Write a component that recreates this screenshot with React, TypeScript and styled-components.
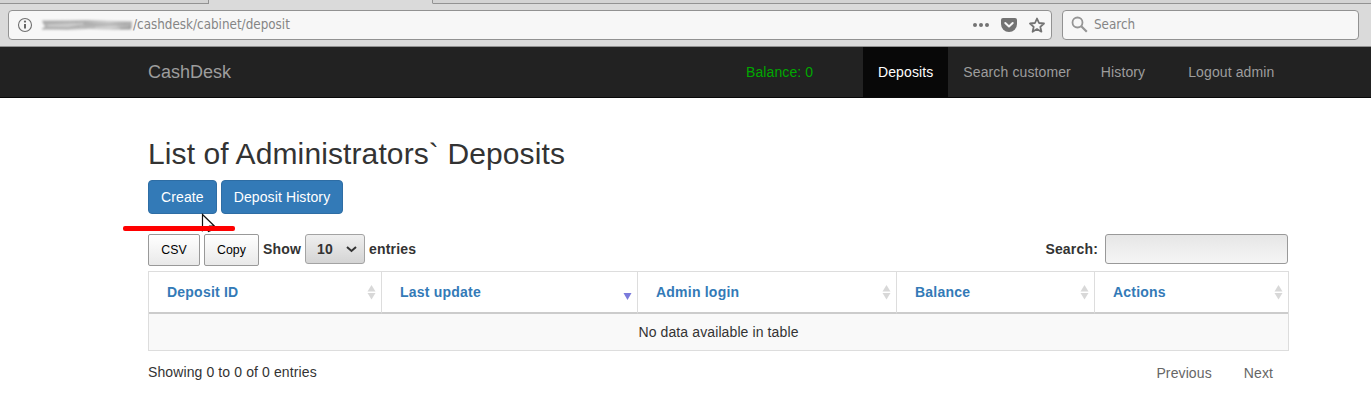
import React from 'react';
import styled, { createGlobalStyle, css } from 'styled-components';

const GlobalStyle = createGlobalStyle`
  * { box-sizing: border-box; }
  body {
    margin: 0;
    background: #fff;
    color: #333;
    font: 14px/20px "Liberation Sans", Arial, sans-serif;
    letter-spacing: 0.11px;
    overflow: hidden;
  }
  button, select, input { font-family: inherit; letter-spacing: inherit; }
`;

const Chrome = styled.header`
  height: 47px;
  background: #dadada;
  border-bottom: 1px solid #919191;
  font: 13.33px/18px "DejaVu Sans Condensed", "DejaVu Sans", sans-serif;
  font-stretch: condensed;
  letter-spacing: 0;
  color: #858585;
`;

const TabStrip = styled.div`
  display: flex;
  height: 4px;
`;

const Tab = styled.div<{ $width?: number; $active?: boolean }>`
  flex: ${p => (p.$width ? `0 0 ${p.$width}px` : '1')};
  background: ${p => (p.$active ? '#dadada' : '#d3d3d3')};
  border-bottom: 1px solid ${p => (p.$active ? 'transparent' : '#929292')};
  border-right: ${p => (p.$width ? '1px solid #929292' : '0')};
`;

const Toolbar = styled.div`
  display: flex;
  gap: 10px;
  padding: 6px 12px 0 8px;
`;

const Field = styled.div<{ $width: number }>`
  display: flex;
  align-items: center;
  width: ${p => p.$width}px;
  height: 30px;
  padding: 0 6px 1px 8px;
  background: #f7f7f7;
  border: 1px solid #929292;
  border-radius: 4px;
`;

const Url = styled.span`
  flex: 1;
  display: flex;
  align-items: center;
  white-space: pre;
`;

const Smudge = styled.svg`
  margin: 0 -1px 0 7px;
`;

const FieldIcons = styled.span`
  display: flex;
  align-items: center;
  gap: 12px;
`;

const SearchHint = styled.span`
  margin-left: 6px;
`;

const Navbar = styled.nav`
  display: flex;
  height: 51px;
  padding-left: 148px;
  background: #222;
  border-bottom: 1px solid #080808;
  color: #9d9d9d;
  line-height: 50px;
`;

const Brand = styled.a`
  width: 597px;
  font-size: 18px;
  letter-spacing: 0;
`;

const Balance = styled.span`
  width: 118px;
  padding-left: 1px;
  color: #00a800;
`;

const NavLink = styled.a<{ $active?: boolean; $spaced?: boolean }>`
  height: 51px;
  padding: 0 15px;
  margin-left: ${p => (p.$spaced ? 13 : 0)}px;
  color: ${p => (p.$active ? '#fff' : '#9d9d9d')};
  background: ${p => (p.$active ? '#080808' : 'transparent')};
`;

const Main = styled.main`
  width: 1141px;
  margin-left: 148px;
  padding-top: 39px;
`;

const Title = styled.h2`
  margin: 0 0 10px;
  font-size: 30px;
  font-weight: 400;
  line-height: 33px;
`;

const Actions = styled.div`
  position: relative;
  display: flex;
  gap: 4px;
`;

const PrimaryButton = styled.button`
  height: 34px;
  padding: 0 12px;
  color: #fff;
  background: #337ab7;
  border: 1px solid #2e6da4;
  border-radius: 4px;
  font-size: 14px;
`;

const Pointer = styled.svg`
  position: absolute;
  left: 53px;
  top: 33px;
`;

const Marker = styled.div`
  position: absolute;
  left: -25px;
  top: 46px;
  width: 112px;
  height: 5px;
  border-radius: 2px;
  background: #f00;
`;

const Controls = styled.div`
  display: flex;
  align-items: flex-start;
  height: 37px;
  margin-top: 20px;
  padding-right: 1px;
`;

const ExportButton = styled.button<{ $width: number }>`
  width: ${p => p.$width}px;
  height: 32px;
  margin-right: 4px;
  padding: 0;
  color: #000;
  background: linear-gradient(#fff, #e9e9e9);
  border: 1px solid #999;
  border-radius: 2px;
  font-size: 12.3px;
`;

const ControlLabel = styled.label<{ $push?: boolean }>`
  font-weight: 700;
  letter-spacing: 0.18px;
  line-height: 30px;
  margin-left: ${p => (p.$push ? 'auto' : '0')};
`;

const LengthSelect = styled.div`
  display: flex;
  align-items: center;
  justify-content: space-between;
  width: 60px;
  height: 30px;
  margin: 0 4px;
  padding: 0 7px 0 11px;
  font-weight: 700;
  background: linear-gradient(#efefef, #d4d4d4);
  border: 1px solid #a3a3a3;
  border-radius: 3px;
`;

const FilterInput = styled.input`
  width: 183px;
  height: 30px;
  margin-left: 7px;
  background: linear-gradient(#e6e6e6, #f5f5f5);
  border: 1px solid #999;
  border-radius: 3px;
`;

const Table = styled.div`
  width: 1141px;
  border: 1px solid #ddd;
`;

const HeadRow = styled.div`
  display: grid;
  grid-template-columns: 233px 256px 259px 198px 193px;
`;

const HeadCell = styled.div`
  display: flex;
  align-items: center;
  justify-content: space-between;
  height: 42px;
  padding: 0 5px 0 18px;
  color: #337ab7;
  font-weight: 700;
  letter-spacing: 0.22px;
  border-bottom: 2px solid #ccc;
  ${css`
    &:not(:last-child) { border-right: 1px solid #ddd; }
  `}
`;

const EmptyRow = styled.div`
  height: 36px;
  line-height: 36px;
  text-align: center;
  background: #f9f9f9;
`;

const Footer = styled.footer`
  display: flex;
  justify-content: space-between;
  padding: 11px 16px 0 0;
`;

const Pager = styled.div`
  display: flex;
  gap: 32px;
  padding-top: 1px;
  color: #666;
`;

const InfoIcon = () => (
  <svg width="16" height="16" viewBox="0 0 16 16">
    <circle cx="8" cy="8" r="6.5" fill="none" stroke="#707070" strokeWidth="1.1" />
    <path d="M8 7v4.5" stroke="#666" strokeWidth="2" />
    <circle cx="8" cy="4.6" r="1.15" fill="#666" />
  </svg>
);

const HiddenHost = () => (
  <Smudge width="94" height="16" viewBox="0 0 94 16">
    <defs>
      <filter id="soft" x="-5%" y="-20%" width="110%" height="140%">
        <feGaussianBlur stdDeviation="0.8" />
      </filter>
      <linearGradient id="ink" x1="0" x2="1">
        <stop offset="0" stopColor="#b2b2b2" />
        <stop offset="0.3" stopColor="#c4c4c4" />
        <stop offset="0.5" stopColor="#b4b4b4" />
        <stop offset="0.75" stopColor="#cbcbcb" />
        <stop offset="1" stopColor="#aaa" />
      </linearGradient>
    </defs>
    <g filter="url(#soft)">
      <path d="M2 3.500 45 3l47 1.500-1 8-18 .3-24-1L28 13 2 12l3-2.500-2-3Z" fill="url(#ink)" />
      <path d="M3 5.500 35 5l20 3 32-1M2 12l26-.8 12-2" fill="none" stroke="#a2a2a2" strokeWidth="1" />
      <path d="M8 8.500h20l15-2M55 10.500l22-1" fill="none" stroke="#d6d6d6" strokeWidth="1.2" />
      <path d="M80 11.500h10l1-3" fill="none" stroke="#8f8f8f" strokeWidth="1.2" />
    </g>
  </Smudge>
);

const DotsIcon = () => (
  <svg width="16" height="16" viewBox="0 0 16 16" fill="#737373">
    <circle cx="2" cy="8" r="2" />
    <circle cx="8" cy="8" r="2" />
    <circle cx="14" cy="8" r="2" />
  </svg>
);

const PocketIcon = () => (
  <svg width="16" height="16" viewBox="0 0 16 16">
    <path d="M2 1h12a2 2 0 0 1 2 2v4a8 8 0 0 1-16 0V3a2 2 0 0 1 2-2Z" fill="#737373" />
    <path d="m4.300 6 3.700 3.500L11.700 6" fill="none" stroke="#f7f7f7" strokeWidth="2" strokeLinecap="round" strokeLinejoin="round" />
  </svg>
);

const StarIcon = () => (
  <svg width="16" height="16" viewBox="0 0 16 16">
    <path
      d="m8 1.500 2 4.500 5 .5-3.700 3.300 1.100 4.900L8 12.100l-4.400 2.600 1.100-4.900L1 6.500 6 6Z"
      fill="none" stroke="#737373" strokeWidth="1.8" strokeLinejoin="round"
    />
  </svg>
);

const LensIcon = () => (
  <svg width="17" height="17" viewBox="0 0 17 17" fill="none" stroke="#959595">
    <circle cx="6.500" cy="6.500" r="5" strokeWidth="1.8" />
    <path d="m10.300 10.300 5.500 5.500" strokeWidth="2.200" />
  </svg>
);

const Chevron = () => (
  <svg width="11" height="7" viewBox="0 0 11 7">
    <path d="m1 1 4.500 4L10 1" fill="none" stroke="#333" strokeWidth="2" />
  </svg>
);

const SortIcon = ({ descending }: { descending?: boolean }) => (
  <svg width="9" height="16" viewBox="0 0 9 16">
    {!descending && <path d="M4.500 1 8.500 7.500h-8Z" fill="#d8d8d8" />}
    <path
      d={descending ? 'M0.500 9h8l-4 7Z' : 'M0.500 9h8l-4 6.500Z'}
      fill={descending ? '#7b7bdc' : '#d8d8d8'}
    />
  </svg>
);

const columns = ['Deposit ID', 'Last update', 'Admin login', 'Balance', 'Actions'];

export default function App() {
  return (
    <>
      <GlobalStyle />
      <Chrome>
        <TabStrip>
          <Tab $width={209} />
          <Tab $width={224} $active />
          <Tab />
        </TabStrip>
        <Toolbar>
          <Field $width={1044}>
            <InfoIcon />
            <Url><HiddenHost />/cashdesk/cabinet/deposit</Url>
            <FieldIcons><DotsIcon /><PocketIcon /><StarIcon /></FieldIcons>
          </Field>
          <Field $width={297}>
            <LensIcon />
            <SearchHint>Search</SearchHint>
          </Field>
        </Toolbar>
      </Chrome>
      <Navbar>
        <Brand>CashDesk</Brand>
        <Balance>Balance: 0</Balance>
        <NavLink $active>Deposits</NavLink>
        <NavLink>Search customer</NavLink>
        <NavLink>History</NavLink>
        <NavLink $spaced>Logout admin</NavLink>
      </Navbar>
      <Main>
        <Title>List of Administrators` Deposits</Title>
        <Actions>
          <PrimaryButton>Create</PrimaryButton>
          <PrimaryButton>Deposit History</PrimaryButton>
          <Pointer width="14" height="21" viewBox="0 0 14 21">
            <path d="M1.500 1.500v16l3.500-3.500 2.500 4.500 3-1.300L8.700 13h4.600Z" fill="#fff" stroke="#111" strokeWidth="1.200" />
          </Pointer>
          <Marker />
        </Actions>
        <Controls>
          <ExportButton $width={52}>CSV</ExportButton>
          <ExportButton $width={55}>Copy</ExportButton>
          <ControlLabel>Show</ControlLabel>
          <LengthSelect>10<Chevron /></LengthSelect>
          <ControlLabel>entries</ControlLabel>
          <ControlLabel $push>Search:</ControlLabel>
          <FilterInput />
        </Controls>
        <Table>
          <HeadRow>
            {columns.map(name => (
              <HeadCell key={name}>
                {name}
                <SortIcon descending={name === 'Last update'} />
              </HeadCell>
            ))}
          </HeadRow>
          <EmptyRow>No data available in table</EmptyRow>
        </Table>
        <Footer>
          <span>Showing 0 to 0 of 0 entries</span>
          <Pager><span>Previous</span><span>Next</span></Pager>
        </Footer>
      </Main>
    </>
  );
}
